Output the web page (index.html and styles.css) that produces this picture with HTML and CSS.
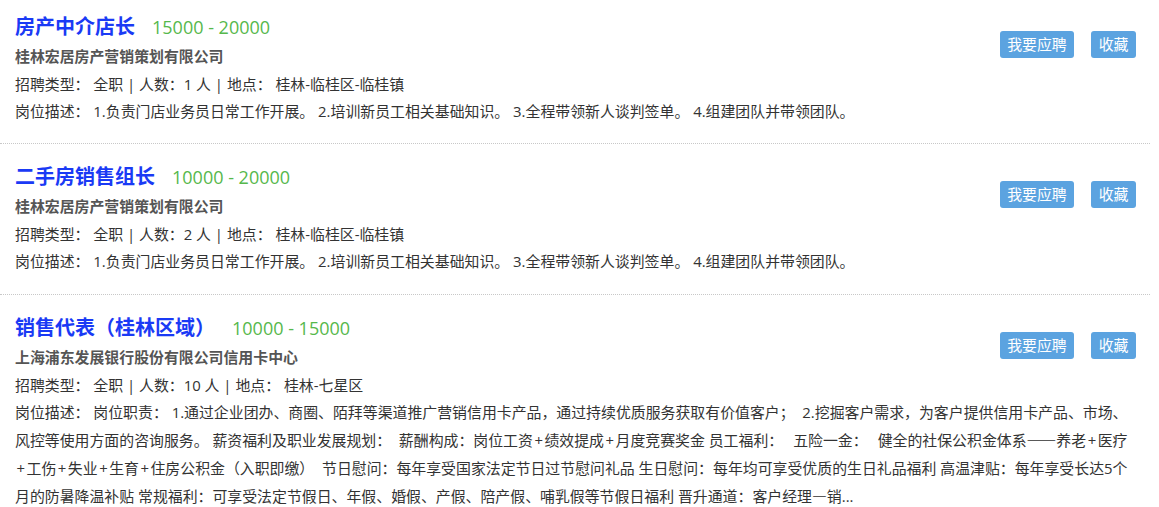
FILE: index.html
```html
<!DOCTYPE html>
<html lang="zh-CN">
<head>
<meta charset="utf-8">
<title>职位列表</title>
<link rel="stylesheet" href="styles.css">
</head>
<body>
<div class="job-list">
  <div class="job">
    <div class="actions">
      <a class="btn">我要应聘</a>
      <a class="btn">收藏</a>
    </div>
    <div class="title-line"><span class="title">房产中介店长</span><span class="salary">15000 - 20000</span></div>
    <div class="company">桂林宏居房产营销策划有限公司</div>
    <div class="info">招聘类型：&nbsp;全职 | 人数：1 人 | 地点：&nbsp;桂林-临桂区-临桂镇</div>
    <div class="desc">岗位描述：&nbsp;1.负责门店业务员日常工作开展。 2.培训新员工相关基础知识。 3.全程带领新人谈判签单。 4.组建团队并带领团队。</div>
  </div>
  <div class="job">
    <div class="actions">
      <a class="btn">我要应聘</a>
      <a class="btn">收藏</a>
    </div>
    <div class="title-line"><span class="title">二手房销售组长</span><span class="salary">10000 - 20000</span></div>
    <div class="company">桂林宏居房产营销策划有限公司</div>
    <div class="info">招聘类型：&nbsp;全职 | 人数：2 人 | 地点：&nbsp;桂林-临桂区-临桂镇</div>
    <div class="desc">岗位描述：&nbsp;1.负责门店业务员日常工作开展。 2.培训新员工相关基础知识。 3.全程带领新人谈判签单。 4.组建团队并带领团队。</div>
  </div>
  <div class="job">
    <div class="actions">
      <a class="btn">我要应聘</a>
      <a class="btn">收藏</a>
    </div>
    <div class="title-line"><span class="title">销售代表（桂林区域）</span><span class="salary">10000 - 15000</span></div>
    <div class="company">上海浦东发展银行股份有限公司信用卡中心</div>
    <div class="info">招聘类型：&nbsp;全职 | 人数：10 人 | 地点：&nbsp;桂林-七星区</div>
    <div class="desc">岗位描述：&nbsp;岗位职责：&nbsp;1.通过企业团办、商圈、陌拜等渠道推广营销信用卡产品，通过持续优质服务获取有价值客户；&nbsp; 2.挖掘客户需求，为客户提供信用卡产品、市场、风控等使用方面的咨询服务。 薪资福利及职业发展规划：&nbsp; 薪酬构成：岗位工资<span class="plus">+</span>绩效提成<span class="plus">+</span>月度竞赛奖金 员工福利：<span class="sp"></span>五险一金：<span class="sp"></span>健全的社保公积金体系<span class="dash">——</span>养老<span class="plus">+</span>医疗<span class="plus">+</span>工伤<span class="plus">+</span>失业<span class="plus">+</span>生育<span class="plus">+</span>住房公积金（入职即缴）&nbsp; 节日慰问：每年享受国家法定节日过节慰问礼品 生日慰问：每年均可享受优质的生日礼品福利 高温津贴：每年享受长达5个月的防暑降温补贴 常规福利：可享受法定节假日、年假、婚假、产假、陪产假、哺乳假等节假日福利 晋升通道：客户经理<span class="dash">—</span>销...</div>
  </div>
</div>
</body>
</html>
```
FILE: styles.css
```css
html, body {
  margin: 0;
  padding: 0;
  background: #fff;
}

body {
  font-family: "Open Sans", "Noto Sans CJK SC", sans-serif;
  font-size: 14.9px;
  color: #333;
}

.job-list {
  width: 1150px;
}

.job {
  padding: 18px 14px 18px 15px;
  border-bottom: 1px dotted #c8c8c8;
}

.job:first-child {
  padding-top: 12px;
}

.actions {
  float: right;
  display: flex;
  gap: 17px;
  margin-top: 19px;
}

.btn {
  display: block;
  height: 27px;
  line-height: 27px;
  padding: 0 7.5px;
  background: #5ba3e0;
  color: #fff;
  border-radius: 3px;
  font-size: 14.9px;
}

.title-line {
  line-height: 30px;
  height: 30px;
}

.title {
  font-size: 20px;
  font-weight: bold;
  color: #1a3af5;
}

.salary {
  font-size: 18px;
  color: #56b84c;
  margin-left: 17px;
}

.company {
  font-size: 14.9px;
  font-weight: bold;
  color: #555;
  line-height: 28px;
}

.info {
  line-height: 28px;
}

.desc {
  line-height: 27.4px;
}

.plus {
  padding: 0 1.5px;
}

.dash {
  font-family: "Noto Sans CJK SC", sans-serif;
}

.sp {
  display: inline-block;
  width: 10px;
}
```
